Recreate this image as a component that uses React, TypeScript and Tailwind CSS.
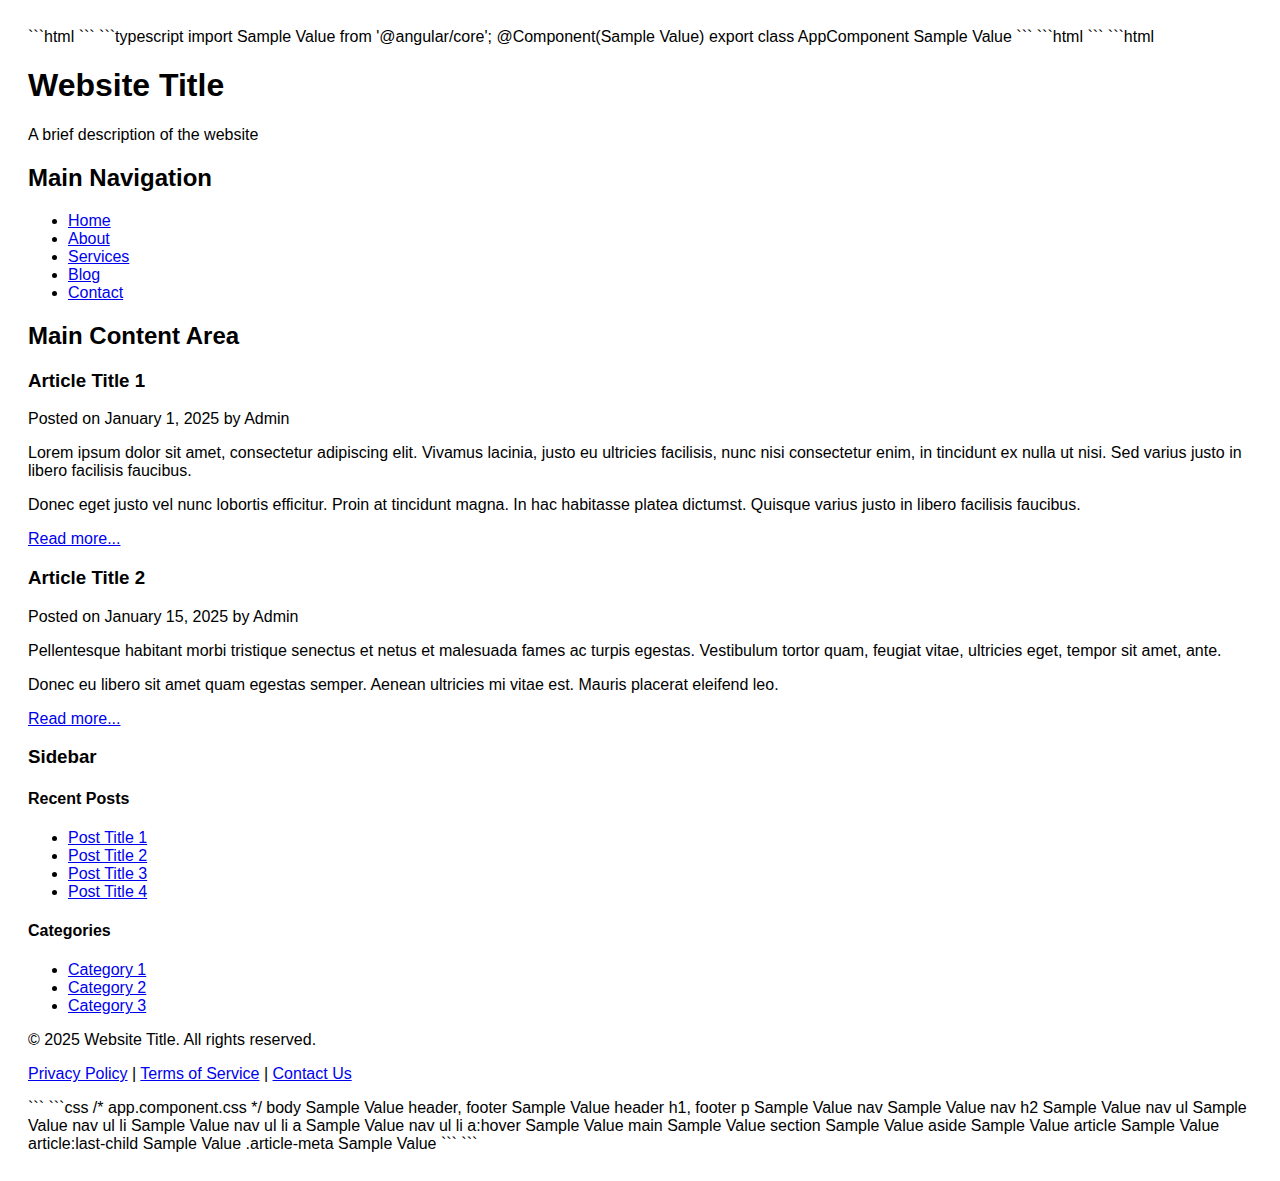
export default function App() {
  const link = 'text-[#0000EE] underline'
  const p = 'my-4'
  const h2 = 'text-[24px] leading-[normal] font-bold my-[19.92px]'
  const h3 = 'text-[18.72px] leading-[normal] font-bold my-[18.72px]'
  const h4 = 'text-[16px] leading-[normal] font-bold my-[21.28px]'
  const ul = 'list-disc pl-10 my-4'

  return (
    <div className="min-h-screen bg-white text-black px-[28px] pt-[12px] pb-[12px] text-[16px] leading-[normal] font-[family-name:Liberation_Sans,Arial,sans-serif]">
      <p className={p}>
        ```html ``` ```typescript import Sample Value from '@angular/core'; @Component(Sample Value) export class
        AppComponent Sample Value ``` ```html ``` ```html
      </p>

      {/* Header */}
      <header>
        <h1 className="text-[32px] leading-[normal] font-bold my-[21.44px]">Website Title</h1>
        <p className={p}>A brief description of the website</p>
      </header>

      {/* Nav */}
      <nav>
        <h2 className={h2}>Main Navigation</h2>
        <ul className={ul}>
          <li><a href="#" className={link}>Home</a></li>
          <li><a href="#" className={link}>About</a></li>
          <li><a href="#" className={link}>Services</a></li>
          <li><a href="#" className={link}>Blog</a></li>
          <li><a href="#" className={link}>Contact</a></li>
        </ul>
      </nav>

      <main>
        <section>
          <h2 className={h2}>Main Content Area</h2>
          <article>
            <h3 className={h3}>Article Title 1</h3>
            <p className={p}>Posted on January 1, 2025 by Admin</p>
            <p className={p}>
              Lorem ipsum dolor sit amet, consectetur adipiscing elit. Vivamus lacinia, justo eu ultricies facilisis,
              nunc nisi consectetur enim, in tincidunt ex nulla ut nisi. Sed varius justo in libero facilisis faucibus.
            </p>
            <p className={p}>
              Donec eget justo vel nunc lobortis efficitur. Proin at tincidunt magna. In hac habitasse platea dictumst.
              Quisque varius justo in libero facilisis faucibus.
            </p>
            <p className={p}><a href="#" className={link}>Read more...</a></p>
          </article>
          <article>
            <h3 className={h3}>Article Title 2</h3>
            <p className={p}>Posted on January 15, 2025 by Admin</p>
            <p className={p}>
              Pellentesque habitant morbi tristique senectus et netus et malesuada fames ac turpis egestas. Vestibulum
              tortor quam, feugiat vitae, ultricies eget, tempor sit amet, ante.
            </p>
            <p className={p}>Donec eu libero sit amet quam egestas semper. Aenean ultricies mi vitae est. Mauris placerat eleifend leo.</p>
            <p className={p}><a href="#" className={link}>Read more...</a></p>
          </article>
        </section>

        <aside>
          <h3 className={h3}>Sidebar</h3>
          <h4 className={h4}>Recent Posts</h4>
          <ul className={ul}>
            <li><a href="#" className={link}>Post Title 1</a></li>
            <li><a href="#" className={link}>Post Title 2</a></li>
            <li><a href="#" className={link}>Post Title 3</a></li>
            <li><a href="#" className={link}>Post Title 4</a></li>
          </ul>
          <h4 className={h4}>Categories</h4>
          <ul className={ul}>
            <li><a href="#" className={link}>Category 1</a></li>
            <li><a href="#" className={link}>Category 2</a></li>
            <li><a href="#" className={link}>Category 3</a></li>
          </ul>
        </aside>
      </main>

      <footer>
        <p className={p}>© 2025 Website Title. All rights reserved.</p>
        <p className={p}>
          <a href="#" className={link}>Privacy Policy</a> | <a href="#" className={link}>Terms of Service</a> |{' '}
          <a href="#" className={link}>Contact Us</a>
        </p>
      </footer>

      <p className={p}>
        ``` ```css /* app.component.css */ body Sample Value header, footer Sample Value header h1, footer p Sample Value
        nav Sample Value nav h2 Sample Value nav ul Sample Value nav ul li Sample Value nav ul li a Sample Value nav ul li
        a:hover Sample Value main Sample Value section Sample Value aside Sample Value article Sample Value
        article:last-child Sample Value .article-meta Sample Value ``` ```
      </p>
    </div>
  )
}
